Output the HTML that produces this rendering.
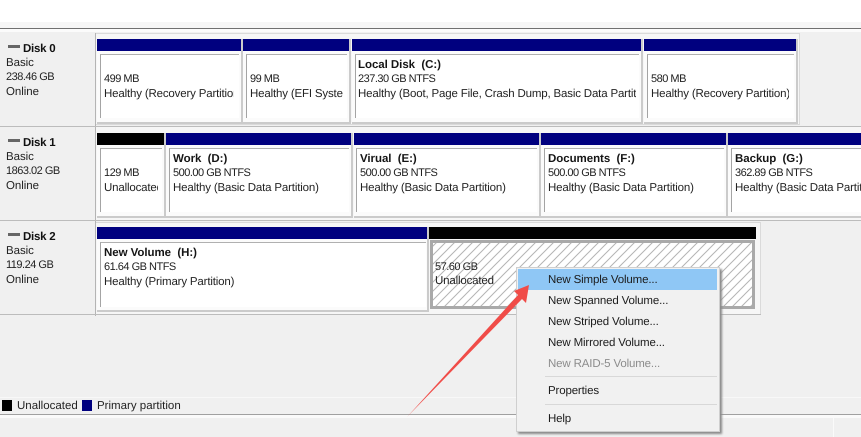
<!DOCTYPE html>
<html><head><meta charset="utf-8"><style>
html,body{margin:0;padding:0;background:#f0f0f0}
#r{position:relative;width:861px;height:437px;overflow:hidden;background:#f0f0f0;font:11.5px/14.3px "Liberation Sans",sans-serif;color:#222;text-rendering:geometricPrecision}
#r div{position:absolute;box-sizing:border-box}
.b{height:12px}
.n{background:#00007f}.k{background:#000}
.w{background:#fbfbfb;border-bottom:2px solid #cbcbcb;border-right:2px solid #cbcbcb}
.p{background:#fff;border-top:1px solid #b0b0b0;border-left:1px solid #a4a4a4}
.t{white-space:nowrap;overflow:hidden;letter-spacing:-.17px}
.t b{letter-spacing:-.05px;color:#151515}
.t i,.h i{font-style:normal;font-size:11px;letter-spacing:-.5px}
.h{left:6px;white-space:nowrap;letter-spacing:-.05px}
.h b{letter-spacing:-.25px;color:#111}
.l{background:#a8a8a8;height:1px}
.m{left:548px;white-space:nowrap;color:#1c1c1c;letter-spacing:-.15px}
</style></head><body><div id="r">
<div style="left:0;top:0;width:861px;height:22px;background:#fff"></div>
<div style="left:0;top:22px;width:861px;height:6px;background:#f6f6f6"></div>
<div style="left:0;top:28px;width:861px;height:1px;background:#707070"></div>
<div style="left:0;top:29px;width:861px;height:3px;background:#fbfbfb"></div>

<div style="left:95px;top:33px;width:705px;height:92px;background:#f6f6f6;border:1px solid #dadada"></div>
<div style="left:95px;top:127px;width:766px;height:93px;background:#f6f6f6"></div>
<div style="left:95px;top:222px;width:666px;height:93px;background:#f6f6f6;border:1px solid #dadada"></div>
<div style="left:95px;top:33px;width:1px;height:283px;background:#b4b4b4"></div>
<div class="l" style="left:0;top:126px;width:861px;background:#bcbcbc"></div>
<div class="l" style="left:0;top:220px;width:861px;background:#bcbcbc"></div>
<div class="l" style="left:0;top:314px;width:761px;background:#bcbcbc"></div>

<!-- disk headers -->
<div style="left:8px;top:45px;width:12px;height:3px;background:#666"></div>
<div class="h" style="top:42px;left:23px"><b>Disk 0</b></div>
<div class="h" style="top:56px">Basic<br><i>238.46 GB</i><br>Online</div>
<div style="left:8px;top:139px;width:12px;height:3px;background:#666"></div>
<div class="h" style="top:136px;left:23px"><b>Disk 1</b></div>
<div class="h" style="top:150px">Basic<br><i>1863.02 GB</i><br>Online</div>
<div style="left:8px;top:233px;width:12px;height:3px;background:#666"></div>
<div class="h" style="top:230px;left:23px"><b>Disk 2</b></div>
<div class="h" style="top:244px">Basic<br><i>119.24 GB</i><br>Online</div>

<!-- disk 0 -->
<div class="w" style="left:97px;top:39px;width:146px;height:85px"></div>
<div class="w" style="left:243px;top:39px;width:108px;height:85px"></div>
<div class="w" style="left:352px;top:39px;width:291px;height:85px"></div>
<div class="w" style="left:644px;top:39px;width:154px;height:85px"></div>
<div class="b n" style="left:97px;top:39px;width:144px"></div>
<div class="b n" style="left:243px;top:39px;width:106px"></div>
<div class="b n" style="left:352px;top:39px;width:289px"></div>
<div class="b n" style="left:644px;top:39px;width:152px"></div>
<div class="p" style="left:100px;top:54px;width:139px;height:64px"></div>
<div class="p" style="left:246px;top:54px;width:101px;height:64px"></div>
<div class="p" style="left:355px;top:54px;width:284px;height:64px"></div>
<div class="p" style="left:647px;top:54px;width:147px;height:64px"></div>
<div class="t" style="left:104px;top:58px;width:130px"><br><i>499 MB</i><br>Healthy (Recovery Partition)</div>
<div class="t" style="left:250px;top:58px;width:93px"><br><i>99 MB</i><br>Healthy (EFI System Partition)</div>
<div class="t" style="left:358px;top:58px;width:278px"><b>Local Disk&nbsp; (C:)</b><br><i>237.30 GB NTFS</i><br>Healthy (Boot, Page File, Crash Dump, Basic Data Partition)</div>
<div class="t" style="left:651px;top:58px;width:138px"><br><i>580 MB</i><br>Healthy (Recovery Partition)</div>

<!-- disk 1 -->
<div class="w" style="left:97px;top:133px;width:69px;height:85px"></div>
<div class="w" style="left:166px;top:133px;width:187px;height:85px"></div>
<div class="w" style="left:354px;top:133px;width:187px;height:85px"></div>
<div class="w" style="left:541px;top:133px;width:187px;height:85px"></div>
<div class="w" style="left:728px;top:133px;width:140px;height:85px"></div>
<div class="b k" style="left:97px;top:133px;width:67px"></div>
<div class="b n" style="left:166px;top:133px;width:185px"></div>
<div class="b n" style="left:354px;top:133px;width:185px"></div>
<div class="b n" style="left:541px;top:133px;width:185px"></div>
<div class="b n" style="left:728px;top:133px;width:133px"></div>
<div class="p" style="left:100px;top:148px;width:62px;height:64px"></div>
<div class="p" style="left:169px;top:148px;width:180px;height:64px"></div>
<div class="p" style="left:356px;top:148px;width:181px;height:64px"></div>
<div class="p" style="left:544px;top:148px;width:180px;height:64px"></div>
<div class="p" style="left:731px;top:148px;width:140px;height:64px"></div>
<div class="t" style="left:104px;top:152px;width:54px"><br><i>129 MB</i><br>Unallocated</div>
<div class="t" style="left:173px;top:152px;width:172px"><b>Work&nbsp; (D:)</b><br><i>500.00 GB NTFS</i><br>Healthy (Basic Data Partition)</div>
<div class="t" style="left:360px;top:152px;width:172px"><b>Virual&nbsp; (E:)</b><br><i>500.00 GB NTFS</i><br>Healthy (Basic Data Partition)</div>
<div class="t" style="left:548px;top:152px;width:172px"><b>Documents&nbsp; (F:)</b><br><i>500.00 GB NTFS</i><br>Healthy (Basic Data Partition)</div>
<div class="t" style="left:735px;top:152px;width:126px"><b>Backup&nbsp; (G:)</b><br><i>362.89 GB NTFS</i><br>Healthy (Basic Data Partition)</div>

<!-- disk 2 -->
<div class="w" style="left:97px;top:227px;width:332px;height:85px"></div>
<div class="b n" style="left:97px;top:227px;width:330px"></div>
<div class="b k" style="left:429px;top:227px;width:327px"></div>
<div class="p" style="left:100px;top:242px;width:326px;height:65px"></div>
<div class="t" style="left:104px;top:246px;width:318px"><b>New Volume&nbsp; (H:)</b><br><i>61.64 GB NTFS</i><br>Healthy (Primary Partition)</div>
<svg style="position:absolute;left:430px;top:240px" width="325" height="69" viewBox="0 0 325 69">
<defs><pattern id="h" width="9" height="9" patternUnits="userSpaceOnUse"><path d="M-1 10L10 -1M-1 1L1 -1M8 10L10 8" stroke="#b4b4b4" stroke-width="1" fill="none"/></pattern></defs>
<rect x="1.5" y="1.5" width="322" height="66" fill="#fff" stroke="#a9a9a9" stroke-width="3"/>
<rect x="3" y="3" width="319" height="63" fill="url(#h)"/>
</svg>
<div class="t" style="left:435px;top:260px;width:80px"><i>57.60 GB</i><br>Unallocated</div>

<!-- legend -->
<div style="left:0;top:397px;width:861px;height:1px;background:#f8f8f8"></div>
<div class="k" style="left:2px;top:400px;width:10px;height:11px"></div>
<div style="left:17px;top:399px;white-space:nowrap">Unallocated</div>
<div class="n" style="left:82px;top:400px;width:10px;height:11px"></div>
<div style="left:97px;top:399px;white-space:nowrap">Primary partition</div>
<div style="left:0;top:414px;width:861px;height:1px;background:#a0a0a0"></div>
<div style="left:0;top:415px;width:861px;height:3px;background:#fafafa"></div>
<div style="left:833px;top:418px;width:1px;height:19px;background:#fafafa"></div>

<!-- menu -->
<div style="left:516px;top:267px;width:204px;height:165px;background:#f1f1f1;border:1px solid #cfcfcf;box-shadow:2px 2px 2px #8a8a8a"></div>
<div style="left:518px;top:269px;width:199px;height:21px;background:#8fc7f5"></div>
<div class="m" style="top:273px">New Simple Volume...</div>
<div class="m" style="top:294px">New Spanned Volume...</div>
<div class="m" style="top:315px">New Striped Volume...</div>
<div class="m" style="top:336px">New Mirrored Volume...</div>
<div class="m" style="top:357px;color:#8c8c8c">New RAID-5 Volume...</div>
<div style="left:545px;top:376px;width:172px;height:1px;background:#d8d8d8"></div>
<div class="m" style="top:384px">Properties</div>
<div style="left:545px;top:404px;width:172px;height:1px;background:#d8d8d8"></div>
<div class="m" style="top:412px">Help</div>

<!-- arrow -->
<svg style="position:absolute;left:400px;top:275px" width="140" height="150" viewBox="400 275 140 150">
<path d="M407 417L518 295L514 291L529 285L526 303L522 299Z" fill="#f04c48"/>
</svg>
</div></body></html>
